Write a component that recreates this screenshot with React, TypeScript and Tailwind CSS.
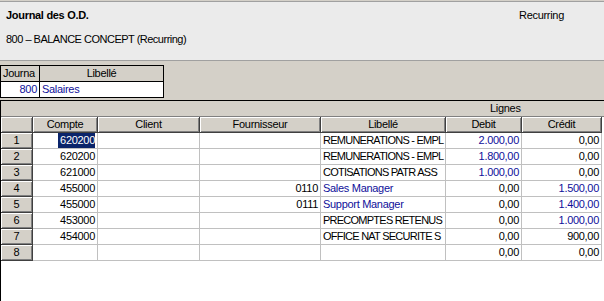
import React from "react";

type Row = {
  n: number;
  compte: string;
  four: string;
  lib: string;
  libBlue?: boolean;
  libBg?: boolean;
  debit: string;
  dBlue?: boolean;
  credit: string;
  cBlue?: boolean;
  selected?: boolean;
};

const rows: Row[] = [
  { n: 1, compte: "620200", four: "", lib: "REMUNERATIONS - EMPL", debit: "2.000,00", dBlue: true, credit: "0,00", selected: true },
  { n: 2, compte: "620200", four: "", lib: "REMUNERATIONS - EMPL", debit: "1.800,00", dBlue: true, credit: "0,00" },
  { n: 3, compte: "621000", four: "", lib: "COTISATIONS PATR ASS", debit: "1.000,00", dBlue: true, credit: "0,00" },
  { n: 4, compte: "455000", four: "0110", lib: "Sales Manager", libBlue: true, debit: "0,00", credit: "1.500,00", cBlue: true },
  { n: 5, compte: "455000", four: "0111", lib: "Support Manager", libBlue: true, debit: "0,00", credit: "1.400,00", cBlue: true },
  { n: 6, compte: "453000", four: "", lib: "PRECOMPTES RETENUS", debit: "0,00", credit: "1.000,00", cBlue: true },
  { n: 7, compte: "454000", four: "", lib: "OFFICE NAT SECURITE S", debit: "0,00", credit: "900,00" },
  { n: 8, compte: "", four: "", lib: "", libBg: true, debit: "0,00", credit: "0,00" },
];

const hdr =
  "bg-[#d4d0c8] border-r border-b border-[#404040] shadow-[inset_1px_1px_0_#ffffff,inset_-1px_-1px_0_#808080] text-center text-black overflow-hidden whitespace-nowrap";
const cell =
  "bg-white border-r border-b border-[#c0c0c0] overflow-hidden whitespace-nowrap";

export default function App() {
  return (
    <div
      className="w-[604px] h-[301px] bg-[#d4d0c8] overflow-hidden text-[11px] leading-[15px] tracking-[-0.3px] text-black"
      style={{ fontFamily: '"Liberation Sans", Arial, sans-serif' }}
    >
      {/* Top panel */}
      <div className="h-[60px] bg-[#ebebeb] border-t border-b border-[#a0a0a0] mt-px flex flex-col pl-[6px] pt-[6px]">
        <div className="flex">
          <span className="font-bold w-[513px]">Journal des O.D.</span>
          <span>Recurring</span>
        </div>
        <div className="mt-[9px] tracking-[-0.5px]">800 – BALANCE CONCEPT (Recurring)</div>
      </div>

      {/* Small journal table */}
      <div className="mt-[4px] w-[164px] border border-black">
        <div className="grid grid-cols-[39px_123px] h-[16px] border-b border-black bg-[#d4d0c8]">
          <div className="border-r border-black pl-[2px] overflow-hidden whitespace-nowrap">Journa</div>
          <div className="text-center">Libellé</div>
        </div>
        <div className="grid grid-cols-[39px_123px] h-[15px] bg-white text-[#10109a]">
          <div className="border-r border-black text-right pr-[2px]">800</div>
          <div className="pl-[2px]">Salaires</div>
        </div>
      </div>

      {/* Main grid */}
      <div className="mt-[2px] h-[203px] bg-white border-t border-l border-black relative">
        <div className="h-[16px] bg-[#d4d0c8] border-b border-[#808080] relative">
          <span className="absolute left-[489px] top-0">Lignes</span>
        </div>
        <div className="grid grid-cols-[32px_65px_102px_121px_125px_76px_80px] auto-rows-[16px]">
          <div className={hdr}></div>
          <div className={hdr}>Compte</div>
          <div className={hdr}>Client</div>
          <div className={hdr}>Fournisseur</div>
          <div className={hdr}>Libellé</div>
          <div className={hdr}>Debit</div>
          <div className={hdr}>Crédit</div>
          {rows.map((r) => (
            <React.Fragment key={r.n}>
              <div className={hdr}>{r.n}</div>
              <div className={`${cell} text-right pr-[2px]`}>
                {r.selected ? (
                  <span className="bg-[#0a246a] text-white inline-block leading-[15px] pl-[2px]">{r.compte}</span>
                ) : (
                  r.compte
                )}
              </div>
              <div className={cell}></div>
              <div className={`${cell} text-right pr-[2px]`}>{r.four}</div>
              <div
                className={`${cell} pl-[2px] ${r.libBlue ? "text-[#10109a]" : "tracking-[-0.75px]"} ${
                  r.libBg ? "bg-[#eaf1fb]" : ""
                }`}
              >
                {r.lib}
              </div>
              <div className={`${cell} text-right pr-[2px] ${r.dBlue ? "text-[#10109a]" : ""}`}>{r.debit}</div>
              <div className={`${cell} text-right pr-[2px] ${r.cBlue ? "text-[#10109a]" : ""}`}>{r.credit}</div>
            </React.Fragment>
          ))}
        </div>
      </div>
    </div>
  );
}
